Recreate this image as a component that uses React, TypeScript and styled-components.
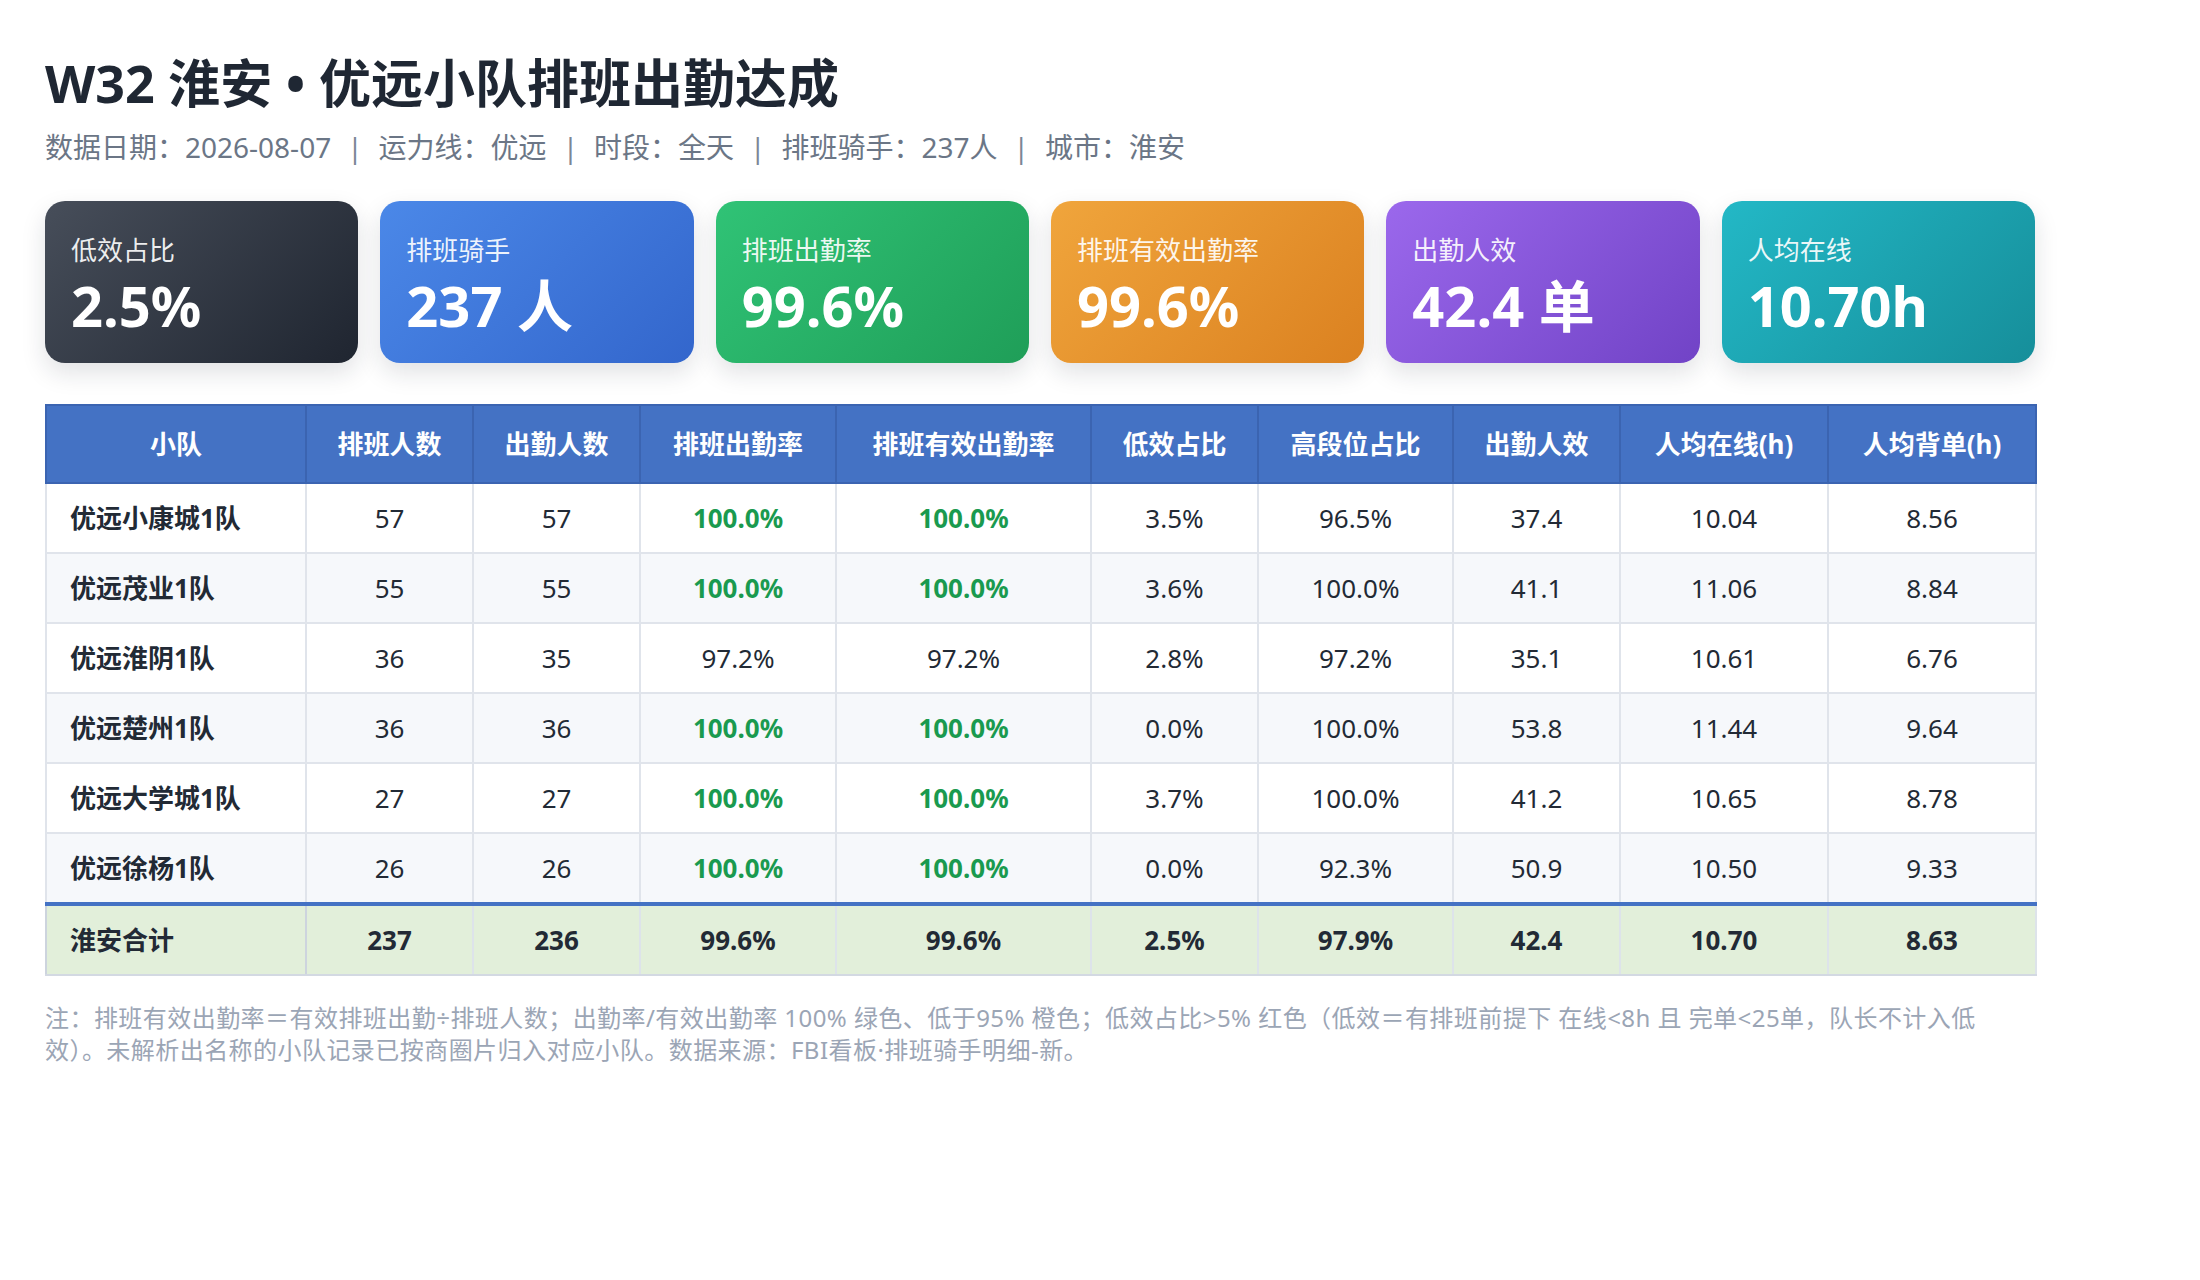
import styled, { createGlobalStyle } from "styled-components";

const GlobalStyle = createGlobalStyle`
	html, body {
		margin: 0;
		padding: 0;
		background: #ffffff;
	}
	body {
		font-family: "Noto Sans", "Noto Sans CJK SC", sans-serif;
		color: #1f2733;
	}
`;

const Page = styled.main`
	width: 1990px;
	padding: 49px 45px 60px;
`;

const Title = styled.h1`
	margin: 0;
	font-size: 52px;
	line-height: 1.3;
	font-weight: 700;
	color: #1f2733;
`;

const Meta = styled.div`
	margin-top: 11px;
	font-size: 28px;
	line-height: 39px;
	color: #6b7686;
`;

const Sep = styled.span`
	margin: 0 16px;
	color: #7b8696;
`;

const CardRow = styled.div`
	margin-top: 34px;
	display: grid;
	grid-template-columns: repeat(6, 1fr);
	gap: 22px;
`;

const tones: Record<string, string> = {
	dark: "linear-gradient(135deg, #474e5a 0%, #1f2530 100%)",
	blue: "linear-gradient(135deg, #4b88e8 0%, #3366cc 100%)",
	green: "linear-gradient(135deg, #30c376 0%, #1f9e58 100%)",
	orange: "linear-gradient(135deg, #f0a53c 0%, #db8120 100%)",
	purple: "linear-gradient(135deg, #9b68ec 0%, #7143c6 100%)",
	teal: "linear-gradient(135deg, #23b8c6 0%, #168e9a 100%)",
};

const Card = styled.div<{ $tone: string }>`
	height: 162px;
	box-sizing: border-box;
	padding: 31px 26px 0;
	border-radius: 20px;
	background: ${(p) => tones[p.$tone]};
	color: #ffffff;
	box-shadow: 0 10px 24px rgba(20, 28, 45, 0.13);
`;

const CardLabel = styled.div`
	font-size: 26px;
	line-height: 36px;
	color: rgba(255, 255, 255, 0.92);
`;

const CardValue = styled.div`
	margin-top: 4px;
	font-size: 56px;
	line-height: 1.2;
	font-weight: 700;
`;

const Table = styled.table`
	margin-top: 41px;
	width: 1990px;
	border-collapse: collapse;
	table-layout: fixed;
	font-size: 26px;
	line-height: 36px;
`;

const HeadCell = styled.th`
	padding: 20px 8px;
	background: #4472c4;
	border: 2px solid #3b64b1;
	color: #ffffff;
	font-weight: 700;
	text-align: center;
`;

const Row = styled.tr<{ $alt?: boolean }>`
	background: ${(p) => (p.$alt ? "#f6f8fb" : "#ffffff")};
`;

const Cell = styled.td<{ $first?: boolean; $good?: boolean }>`
	padding: 16px ${(p) => (p.$first ? "23px" : "8px")};
	border: 2px solid #e0e4eb;
	text-align: ${(p) => (p.$first ? "left" : "center")};
	font-weight: ${(p) => (p.$first || p.$good ? 700 : 400)};
	color: ${(p) => (p.$good ? "#1a9a4f" : "#222a35")};
	white-space: nowrap;
`;

const TotalRow = styled.tr`
	background: #e2efda;
`;

const TotalCell = styled.td<{ $first?: boolean }>`
	padding: 16px ${(p) => (p.$first ? "23px" : "8px")};
	border: 2px solid #dde3ea;
	border-top: 4px solid #4472c4;
	border-bottom-color: #d3d9e2;
	${(p) => (p.$first ? "border-left-color: #cdd4de; border-right-color: #cdd4de;" : "")}
	text-align: ${(p) => (p.$first ? "left" : "center")};
	font-weight: 700;
	color: #222a35;
`;

const Note = styled.p`
	margin: 26px 0 0;
	font-size: 24px;
	line-height: 32px;
	letter-spacing: 0.45px;
	color: #9ba5b5;
`;

const cards = [
	{ tone: "dark", label: "低效占比", value: "2.5%" },
	{ tone: "blue", label: "排班骑手", value: "237 人" },
	{ tone: "green", label: "排班出勤率", value: "99.6%" },
	{ tone: "orange", label: "排班有效出勤率", value: "99.6%" },
	{ tone: "purple", label: "出勤人效", value: "42.4 单" },
	{ tone: "teal", label: "人均在线", value: "10.70h" },
];

const columns = [
	{ title: "小队", width: 260 },
	{ title: "排班人数", width: 167 },
	{ title: "出勤人数", width: 167 },
	{ title: "排班出勤率", width: 196 },
	{ title: "排班有效出勤率", width: 255 },
	{ title: "低效占比", width: 167 },
	{ title: "高段位占比", width: 195 },
	{ title: "出勤人效", width: 167 },
	{ title: "人均在线(h)", width: 208 },
	{ title: "人均背单(h)", width: 208 },
];

const rows: string[][] = [
	["优远小康城1队", "57", "57", "100.0%", "100.0%", "3.5%", "96.5%", "37.4", "10.04", "8.56"],
	["优远茂业1队", "55", "55", "100.0%", "100.0%", "3.6%", "100.0%", "41.1", "11.06", "8.84"],
	["优远淮阴1队", "36", "35", "97.2%", "97.2%", "2.8%", "97.2%", "35.1", "10.61", "6.76"],
	["优远楚州1队", "36", "36", "100.0%", "100.0%", "0.0%", "100.0%", "53.8", "11.44", "9.64"],
	["优远大学城1队", "27", "27", "100.0%", "100.0%", "3.7%", "100.0%", "41.2", "10.65", "8.78"],
	["优远徐杨1队", "26", "26", "100.0%", "100.0%", "0.0%", "92.3%", "50.9", "10.50", "9.33"],
];

const total = ["淮安合计", "237", "236", "99.6%", "99.6%", "2.5%", "97.9%", "42.4", "10.70", "8.63"];

// 出勤率 / 有效出勤率 columns turn green at 100%
const isGood = (col: number, value: string) => (col === 3 || col === 4) && value === "100.0%";

const meta = ["数据日期：2026-08-07", "运力线：优远", "时段：全天", "排班骑手：237人", "城市：淮安"];

const App = () => {
	return (
		<>
			<GlobalStyle />
			<Page>
				<Title>W32 淮安 • 优远小队排班出勤达成</Title>
				<Meta>
					{meta.map((item, idx) => (
						<span key={idx}>
							{idx > 0 && <Sep>|</Sep>}
							{item}
						</span>
					))}
				</Meta>

				<CardRow>
					{cards.map((card) => (
						<Card key={card.label} $tone={card.tone}>
							<CardLabel>{card.label}</CardLabel>
							<CardValue>{card.value}</CardValue>
						</Card>
					))}
				</CardRow>

				<Table>
					<colgroup>
						{columns.map((col) => (
							<col key={col.title} style={{ width: col.width }} />
						))}
					</colgroup>
					<thead>
						<tr>
							{columns.map((col) => (
								<HeadCell key={col.title}>{col.title}</HeadCell>
							))}
						</tr>
					</thead>
					<tbody>
						{rows.map((row, rIdx) => (
							<Row key={row[0]} $alt={rIdx % 2 === 1}>
								{row.map((value, cIdx) => (
									<Cell key={cIdx} $first={cIdx === 0} $good={isGood(cIdx, value)}>
										{value}
									</Cell>
								))}
							</Row>
						))}
						<TotalRow>
							{total.map((value, cIdx) => (
								<TotalCell key={cIdx} $first={cIdx === 0}>
									{value}
								</TotalCell>
							))}
						</TotalRow>
					</tbody>
				</Table>

				<Note>
					注：排班有效出勤率＝有效排班出勤÷排班人数；出勤率/有效出勤率 100% 绿色、低于95% 橙色；低效占比&gt;5% 红色（低效＝有排班前提下 在线&lt;8h 且 完单&lt;25单，队长不计入低效）。未解析出名称的小队记录已按商圈片归入对应小队。数据来源：FBI看板·排班骑手明细-新。
				</Note>
			</Page>
		</>
	);
};

export default App;
